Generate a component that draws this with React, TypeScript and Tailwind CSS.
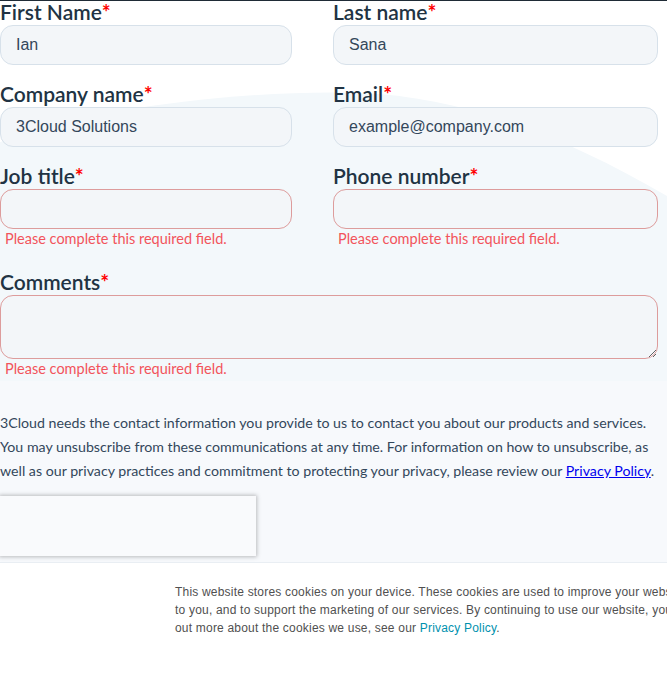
import React from 'react'

const labelCls = "block text-[21px] leading-[22px] font-semibold text-[#213343] mb-[2px]"
const inputCls = "w-full h-[40px] rounded-[13px] bg-[#f3f6f9] border px-[15px] text-[16px] text-[#33475b] outline-none"
const fontPlex = { fontFamily: 'Lato, "Noto Sans", sans-serif' }

function Label({ text }: { text: string }) {
  return (
    <label className={labelCls}>
      {text}<span className="text-[#ff0000] font-bold">*</span>
    </label>
  )
}

function Field({ label, value, error }: { label: string; value?: string; error?: boolean }) {
  return (
    <div className="flex flex-col">
      <Label text={label} />
      <input
        readOnly
        value={value ?? ''}
        className={`${inputCls} ${error ? 'border-[#dd9c9c]' : 'border-[#d7e1ea]'} font-['Liberation_Sans',Arial,sans-serif]`}
      />
      {error && (
        <div className="text-[14.5px] leading-[18px] text-[#f2545b] pl-[5px] mt-[1px]">
          Please complete this required field.
        </div>
      )}
    </div>
  )
}

export default function App() {
  return (
    <div className="w-[667px] h-[693px] bg-white overflow-hidden" style={fontPlex}>
      <div className="relative h-[563px] overflow-hidden border-t border-[#1f2b36] border-b border-b-[#e9eef3]">
        <svg className="absolute inset-0" width="667" height="563" viewBox="0 0 667 563">
          <path d="M -20 150 C 60 110, 240 88, 360 92 C 470 96, 580 140, 700 215 L 700 563 L -20 563 Z" fill="#f3f8fb" />
          <rect x="0" y="380" width="667" height="183" fill="#f8fafc" opacity="0.7" />
        </svg>
        <div className="relative">
          <div className="grid grid-cols-[292px_325px] gap-x-[41px]">
            <div><Field label="First Name" value="Ian" /></div>
            <div><Field label="Last name" value="Sana" /></div>
            <div className="pt-[18px]"><Field label="Company name" value="3Cloud Solutions" /></div>
            <div className="pt-[18px]"><Field label="Email" value="example@company.com" /></div>
            <div className="pt-[18px]"><Field label="Job title" error /></div>
            <div className="pt-[18px]"><Field label="Phone number" error /></div>
          </div>
          <div className="pt-[23px] w-[658px]">
            <Label text="Comments" />
            <textarea
              readOnly
              className="block w-full h-[64px] rounded-[13px] bg-[#f3f6f9] border border-[#dd9c9c] outline-none"
            />
            <div className="text-[14.5px] leading-[18px] text-[#f2545b] pl-[5px] mt-[1px]">
              Please complete this required field.
            </div>
          </div>
          <p className="mt-[33px] text-[14.2px] leading-[24px] text-[#33475b] w-[664px]">
            3Cloud needs the contact information you provide to us to contact you about our products and services.
            You may unsubscribe from these communications at any time. For information on how to unsubscribe, as
            well as our privacy practices and commitment to protecting your privacy, please review our{' '}
            <a className="text-[#0000ee] underline">Privacy Policy</a>.
          </p>
          <div className="mt-[13px] w-[256px] h-[60px] bg-[#f9fafc] shadow-[0_0_4px_1px_rgba(0,0,0,0.25)]" />
        </div>
      </div>
      <div className="bg-white pl-[175px] pt-[20px] whitespace-nowrap text-[12px] leading-[18px] tracking-[0.2px] text-[#505050] font-['Liberation_Sans',Arial,sans-serif]">
        <div>This website stores cookies on your device. These cookies are used to improve your website experience and provide more personalized services</div>
        <div>to you, and to support the marketing of our services. By continuing to use our website, you agree to the use of cookies. To find</div>
        <div>out more about the cookies we use, see our <a className="text-[#0091ae]">Privacy Policy</a>.</div>
      </div>
    </div>
  )
}
